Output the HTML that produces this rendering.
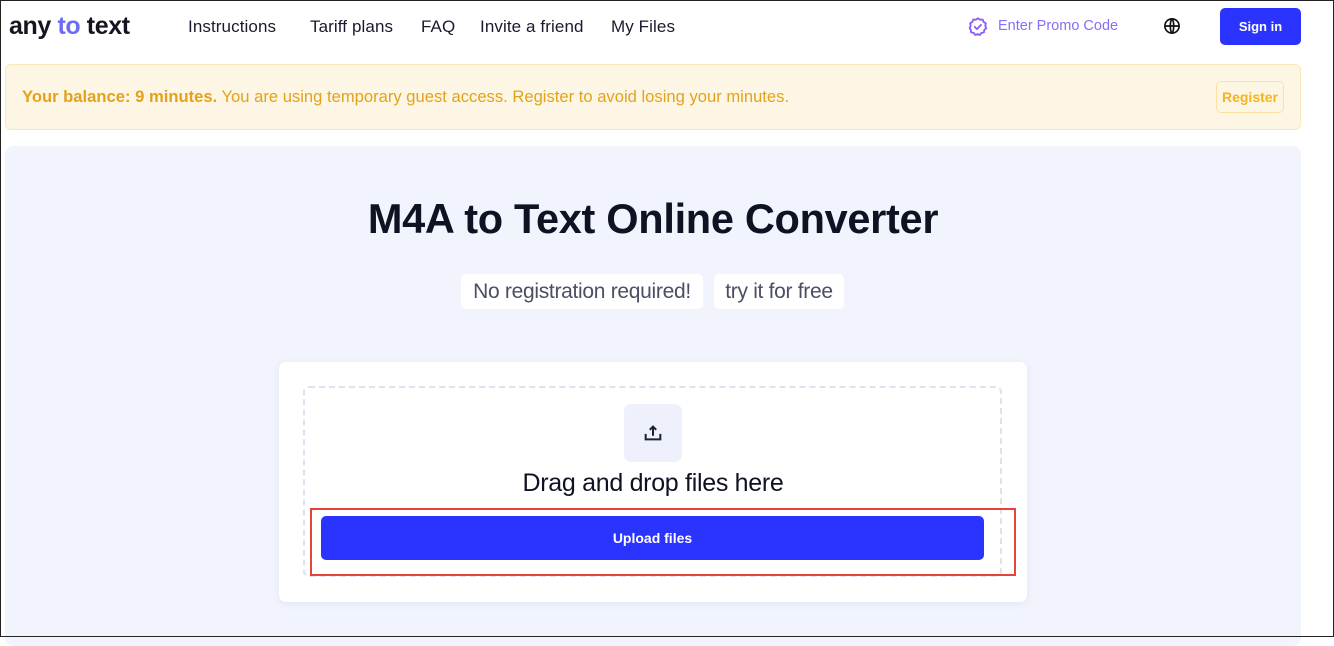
<!DOCTYPE html>
<html><head><meta charset="utf-8"><style>
*{margin:0;padding:0;box-sizing:border-box}
html,body{width:1334px;height:637px;overflow:hidden;background:#fff;font-family:"Liberation Sans",sans-serif}
.frame{position:absolute;left:0;top:0;width:1334px;height:637px;border:1px solid #222;pointer-events:none;z-index:10}
.a{position:absolute;white-space:nowrap}
.nav{font-size:17px;color:#1a1a2e;top:17px;letter-spacing:0.1px}
</style></head><body>
<div class="frame"></div>
<div class="a" style="left:9px;top:12px;font-size:25px;font-weight:bold;color:#15151f;letter-spacing:-0.4px">any <span style="color:#6b6cf6">to</span> text</div>
<div class="a nav" style="left:188px">Instructions</div>
<div class="a nav" style="left:310px">Tariff plans</div>
<div class="a nav" style="left:421px">FAQ</div>
<div class="a nav" style="left:480px">Invite a friend</div>
<div class="a nav" style="left:611px">My Files</div>
<svg class="a" style="left:967px;top:16px" width="22" height="22" viewBox="0 0 24 24" fill="none" stroke="#8b5cf6" stroke-width="2" stroke-linejoin="round" stroke-linecap="round"><path d="M12 2.5l2.3 1.6 2.8-.2 1 2.6 2.4 1.5-.6 2.7 1.1 2.6-2.1 1.8-.4 2.8-2.8.5-1.6 2.3-2.6-1-2.6 1-1.6-2.3-2.8-.5-.4-2.8L2.9 13.3 4 10.7l-.6-2.7L5.8 6.5l1-2.6 2.8.2z"/><path d="M8.5 12l2.3 2.3 4.5-4.6"/></svg>
<div class="a" style="left:998px;top:18px;font-size:14.5px;color:#8b6cf6">Enter Promo Code</div>
<svg class="a" style="left:1163px;top:17px" width="18" height="18" viewBox="0 0 24 24" fill="none" stroke="#111" stroke-width="2.2"><circle cx="12" cy="12" r="9.5"/><path d="M2.5 12h19M12 2.5c-3 3-3 16 0 19M12 2.5c3 3 3 16 0 19"/></svg>
<div class="a" style="left:1220px;top:8px;width:81px;height:37px;background:#2b34ff;border-radius:5px;color:#fff;font-size:13px;font-weight:bold;text-align:center;line-height:37px">Sign in</div>
<div class="a" style="left:5px;top:64px;width:1296px;height:66px;background:#fef6e4;border:1px solid #fce7b8;border-radius:6px"></div>
<div class="a" style="left:22px;top:87px;font-size:16.6px;color:#e3a21a;letter-spacing:0">
<b>Your balance: 9 minutes.</b> You are using temporary guest access. Register to avoid losing your minutes.</div>
<div class="a" style="left:1216px;top:81px;width:68px;height:32px;border:1px solid #fce1a3;border-radius:5px;color:#f5b41e;font-weight:bold;font-size:14px;text-align:center;line-height:30px">Register</div>
<div class="a" style="left:5px;top:146px;width:1296px;height:500px;background:#f1f4fd;border-radius:8px"></div>
<div class="a" style="left:0;width:1306px;top:195px;text-align:center;font-size:41.5px;font-weight:bold;color:#0f1222;letter-spacing:-0.3px">M4A to Text Online Converter</div>
<div class="a" style="left:461px;top:274px;width:242px;height:35px;background:#fff;border-radius:5px;text-align:center;line-height:35px;font-size:21px;color:#4b4f63;letter-spacing:-0.3px">No registration required!</div>
<div class="a" style="left:714px;top:274px;width:130px;height:35px;background:#fff;border-radius:5px;text-align:center;line-height:35px;font-size:21px;color:#4b4f63;letter-spacing:-0.3px">try it for free</div>
<div class="a" style="left:279px;top:362px;width:748px;height:240px;background:#fff;border-radius:7px;box-shadow:0 2px 8px rgba(60,70,120,.08)"></div>
<div class="a" style="left:303px;top:386px;width:699px;height:191px;border:2px dashed #dfe1ee;border-radius:6px"></div>
<div class="a" style="left:624px;top:404px;width:58px;height:58px;background:#eef1fb;border-radius:7px"></div>
<svg class="a" style="left:642px;top:422px" width="22" height="22" viewBox="0 0 24 24" fill="none" stroke="#1e2233" stroke-width="2.2"><path d="M4 13v6h16v-6M12 15V5M8.5 8.5L12 5l3.5 3.5"/></svg>
<div class="a" style="left:0;width:1306px;top:469px;text-align:center;font-size:25px;color:#0f1222;letter-spacing:-0.3px">Drag and drop files here</div>
<div class="a" style="left:310px;top:508px;width:706px;height:68px;border:2px solid #e5443a"></div>
<div class="a" style="left:321px;top:516px;width:663px;height:44px;background:#2b34ff;border-radius:5px;color:#fff;font-weight:bold;font-size:14px;text-align:center;line-height:44px">Upload files</div>
</body></html>
